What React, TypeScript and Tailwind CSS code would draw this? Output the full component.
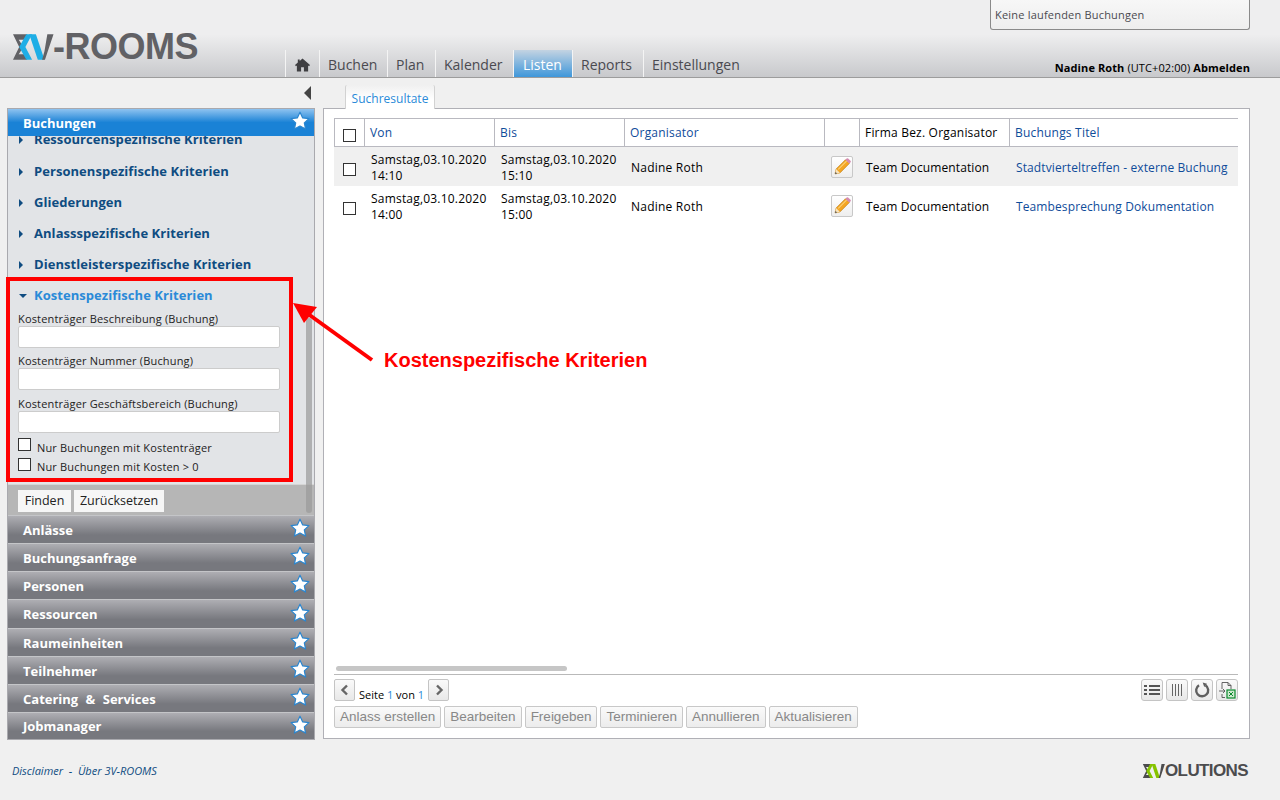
const font = "font-['Open_Sans','Noto_Sans',sans-serif]";

const tabs = [
  { label: "Buchen", width: "w-[68px] pl-[8px]" },
  { label: "Plan", width: "w-[48px] pl-[8px]" },
  { label: "Kalender", width: "w-[78px] pl-[8px]" },
  { label: "Listen", width: "w-[59px] pl-[9px]", active: true },
  { label: "Reports", width: "w-[71px] pl-[8px]" },
  { label: "Einstellungen", width: "w-[110px] pl-[8px]" },
];

const criteria = [
  "Personenspezifische Kriterien",
  "Gliederungen",
  "Anlassspezifische Kriterien",
  "Dienstleisterspezifische Kriterien",
];

const accordions = [
  { label: "Anlässe", height: "h-[28px]" },
  { label: "Buchungsanfrage", height: "h-[28px]" },
  { label: "Personen", height: "h-[28px]" },
  { label: "Ressourcen", height: "h-[29px]" },
  { label: "Raumeinheiten", height: "h-[28px]" },
  { label: "Teilnehmer", height: "h-[28px]" },
  { label: "Catering & Services", height: "h-[28px]" },
  { label: "Jobmanager", height: "h-[27px]" },
];

const costFields = ["Kostenträger Beschreibung (Buchung)", "Kostenträger Nummer (Buchung)", "Kostenträger Geschäftsbereich (Buchung)"];

const rows = [
  { from: "14:10", to: "15:10", title: "Stadtvierteltreffen - externe Buchung", shaded: true },
  { from: "14:00", to: "15:00", title: "Teambesprechung Dokumentation", shaded: false },
];

const actions = ["Anlass erstellen", "Bearbeiten", "Freigeben", "Terminieren", "Annullieren", "Aktualisieren"];

const gridCols = "grid-cols-[30px_130px_130px_200px_35px_150px_229px]";

function Mark({ dark, accent, className }: { dark: string; accent: string; className: string }) {
  return (
    <svg viewBox="0 0 43 27" className={className}>
      <path d="M0 0H15L12.500 6H6L11 13.500L6 21H12.500L15 27H0L6.500 13.500z" fill={dark} />
      <path d="M6.500 13.500L14 0H20L13 13.500L20 27H14z" fill={accent} />
      <path d="M17 0H24L33 27H26z" fill={accent} />
      <path d="M36 0H42.500L33.500 27H30.500L33 18z" fill={dark} />
    </svg>
  );
}

function Star() {
  return (
    <svg viewBox="0 0 20 20" className="h-[20px] w-[20px]">
      <path d="M10 1.200l2.700 5.700 6.200.7-4.600 4.300 1.300 6.200L10 15l-5.600 3.100 1.300-6.200-4.600-4.300 6.200-.7z" fill="#fff" stroke="#2a86d0" strokeWidth="1.200" strokeLinejoin="round" />
    </svg>
  );
}

function Box() {
  return <span className="block h-[13px] w-[13px] shrink-0 border border-[#333] bg-white" />;
}

function Caret({ open }: { open?: boolean }) {
  return open ? (
    <span className="h-0 w-0 border-x-[4px] border-t-[4px] border-x-transparent border-t-[#0f4c81]" />
  ) : (
    <span className="h-0 w-0 border-y-[4px] border-l-[4px] border-y-transparent border-l-[#0f4c81]" />
  );
}

function Pencil() {
  return (
    <span className="flex h-[22px] w-[22px] items-center justify-center rounded-[2px] border border-[#c8c8c8] bg-[linear-gradient(#ffffff,#eeeeee)]">
      <svg viewBox="0 0 16 16" className="h-[17px] w-[17px]">
        <path d="M1 15l1-4.600L10.800 1.600l3.600 3.600L5.600 14z" fill="#f5a623" stroke="#b9770e" strokeWidth=".6" />
        <path d="M4 10.800l7.800-7.800" stroke="#fbd27a" strokeWidth="1" />
        <path d="M10.800 1.600l1.100-1.100a1 1 0 0 1 1.400 0l2.200 2.200a1 1 0 0 1 0 1.400l-1.100 1.100z" fill="#d58bb0" />
        <path d="M1 15l1-4.600 3.600 3.600z" fill="#f7e3bd" />
        <path d="M1 15l.4-1.900 1.500 1.500z" fill="#444" />
      </svg>
    </span>
  );
}

function ToolButton({ children }: { children: React.ReactNode }) {
  return (
    <span className="flex h-[22px] w-[22px] items-center justify-center rounded-[3px] border border-[#c4c4c4] bg-[linear-gradient(#fafafa,#e8e8e8)]">
      {children}
    </span>
  );
}

function PagerButton({ dir }: { dir: "left" | "right" }) {
  return (
    <span className="flex h-[22px] w-[21px] items-center justify-center rounded-[2px] border border-[#c4c4c4] bg-[linear-gradient(#fafafa,#e8e8e8)]">
      <svg viewBox="0 0 12 12" className="h-[12px] w-[12px]">
        <path d={dir === "left" ? "M8 1.500L3.500 6 8 10.500" : "M4 1.500L8.500 6 4 10.500"} fill="none" stroke="#666" strokeWidth="2.400" />
      </svg>
    </span>
  );
}

function Header() {
  return (
    <header className="flex h-[78px] border-b border-[#9c9c9c] bg-[linear-gradient(#eeeeef_0%,#eeeeef_45%,#c8c9cc_100%)]">
      <div className="w-[285px] pl-[13px] pt-[34px]">
        <div className="flex items-center">
          <Mark dark="#616165" accent="#1eaee6" className="h-[26px] w-[41px] shrink-0" />
          <span className="-ml-[1px] font-['Liberation_Sans',sans-serif] text-[36px] font-bold leading-[26px] tracking-[-0.5px] text-[#616165]">-ROOMS</span>
        </div>
      </div>
      <nav className="flex h-[27px] self-end text-[14px] text-[#4a4a50]">
        <div className="flex w-[34px] items-center justify-center border-l border-[#f4f4f4] pr-[1px] pt-[3px]">
          <svg viewBox="0 0 16 14" className="h-[14px] w-[15px]">
            <path d="M8 0l8 7-1 1.200-1-.800V14H9.500V9.500h-3V14H2V7.400l-1 .800L0 7l3-2.600V1h2v1.700z" fill="#3f3f42" />
          </svg>
        </div>
        {tabs.map((t) => (
          <div
            key={t.label}
            className={`flex items-center border-l border-[#f4f4f4] pt-[2px] ${t.width} ${t.active ? "bg-[linear-gradient(#c3d3e2,#3f97da)] text-white" : ""}`}
          >
            {t.label}
          </div>
        ))}
      </nav>
      <div className="flex flex-1 flex-col items-end pr-[30px]">
        <div className="flex h-[30px] w-[260px] items-end rounded-b-[3px] border border-t-0 border-[#8a8a8a] bg-[linear-gradient(#f7f7f7,#eeeeee)] pb-[6px] pl-[4px] text-[11px] tracking-[0.2px] text-[#4a4a50]">
          Keine laufenden Buchungen
        </div>
        <div className="mt-auto pb-[1px] text-[11px] tracking-[0.1px] text-black">
          <b className="font-bold">Nadine Roth</b> (UTC+02:00) <b className="font-bold">Abmelden</b>
        </div>
      </div>
    </header>
  );
}

function Sidebar() {
  return (
    <aside className="relative flex h-[632px] w-[308px] shrink-0 flex-col border border-[#a9a9ae] bg-[#e2e4e7]">
      <div className="z-10 flex h-[27px] shrink-0 items-center justify-between bg-[linear-gradient(#8fc3f0,#1a82d6_50%,#1a82d6)] pl-[15px] pr-[4px] text-[13px] font-bold text-white">
        <span className="pt-[2px]">Buchungen</span>
        <span className="-mt-[3px]"><Star /></span>
      </div>
      <div className="flex-1 overflow-hidden">
        <div className="-mt-[12px] tracking-[0.05px]">
          <div className="mb-[1px] flex h-[31px] items-center gap-[11px] pl-[11px] text-[13px] font-bold text-[#0f4c81]">
            <Caret />
            Ressourcenspezifische Kriterien
          </div>
          {criteria.map((c) => (
            <div key={c} className="flex h-[31px] items-center gap-[11px] pl-[11px] text-[13px] font-bold text-[#0f4c81]">
              <Caret />
              {c}
            </div>
          ))}
          <div className="flex h-[31px] items-center gap-[7px] pl-[11px] text-[13px] font-bold text-[#2a8ad8]">
            <Caret open />
            Kostenspezifische Kriterien
          </div>
          <div className="pl-[10px] text-[11px] tracking-[0.17px] text-[#222]">
            {costFields.map((f, i) => (
              <div key={f} className={i === 1 ? "mb-[6px]" : "mb-[5px]"}>
                <div className="h-[15px] leading-[15px]">{f}</div>
                <input className="block h-[22px] w-[262px] rounded-[2px] border border-[#ccc] bg-white" />
              </div>
            ))}
            <div className="flex h-[20px] items-start gap-[6px]"><Box /><span className="mt-[2px] leading-[15px]">Nur Buchungen mit Kostenträger</span></div>
            <div className="flex h-[20px] items-start gap-[6px]"><Box /><span className="mt-[1px] leading-[15px]">Nur Buchungen mit Kosten &gt; 0</span></div>
          </div>
        </div>
      </div>
      <div className="flex h-[31px] shrink-0 items-start gap-[3px] border-t border-[#d5d5d5] bg-[#b6b6b6] pl-[10px] pt-[5px] text-[12.500px] text-[#222]">
        <span className="flex h-[22px] w-[53px] items-center justify-center bg-[#f6f6f6]">Finden</span>
        <span className="flex h-[22px] w-[90px] items-center justify-center bg-[#f6f6f6]">Zurücksetzen</span>
      </div>
      {accordions.map((a) => (
        <div
          key={a.label}
          className={`flex ${a.height} shrink-0 items-center justify-between border-t border-[#c4c5c8] bg-[linear-gradient(#aeaeb3,#77787e_70%,#77787e)] pl-[15px] pr-[4px] text-[13px] font-bold text-white [word-spacing:4px]`}
        >
          <span className="pt-[2px]">{a.label}</span>
          <span className="-mt-[3px]"><Star /></span>
        </div>
      ))}
      <div className="absolute bottom-[226px] right-[2px] top-[209px] w-[6px] rounded-full bg-[#9a9a9a]/70" />
    </aside>
  );
}

function ResultsTable() {
  return (
    <div className="flex-1 text-[12px] tracking-[0.11px] text-black">
      <div className={`grid h-[29px] ${gridCols} border-y border-[#b9b9c0] tracking-[0.2px] text-[#0f4c9a]`}>
        <div className="flex items-center border-l border-[#b9b9c0] pl-[8px] pt-[5px]"><Box /></div>
        <div className="flex items-center border-l border-[#b9b9c0] pl-[5px]">Von</div>
        <div className="flex items-center border-l border-[#b9b9c0] pl-[5px]">Bis</div>
        <div className="flex items-center border-l border-[#b9b9c0] pl-[5px]">Organisator</div>
        <div className="border-l border-[#b9b9c0]" />
        <div className="flex items-center border-l border-[#b9b9c0] pl-[5px] text-black">Firma Bez. Organisator</div>
        <div className="flex items-center border-l border-[#b9b9c0] pl-[5px]">Buchungs Titel</div>
      </div>
      {rows.map((r) => (
        <div key={r.from} className={`grid h-[39px] ${gridCols} items-center pt-[2px] ${r.shaded ? "bg-[#f0f0f0]" : ""}`}>
          <div className="pl-[9px] pt-[4px]"><Box /></div>
          <div className="pl-[7px] leading-[16px] tracking-[0.2px]">Samstag,03.10.2020<br />{r.from}</div>
          <div className="pl-[7px] leading-[16px] tracking-[0.2px]">Samstag,03.10.2020<br />{r.to}</div>
          <div className="pl-[7px] tracking-[0.22px]">Nadine Roth</div>
          <div className="-mt-[2px] pl-[7px]"><Pencil /></div>
          <div className="pl-[7px]">Team Documentation</div>
          <div className="pl-[7px] text-[#0f4c9a]">{r.title}</div>
        </div>
      ))}
    </div>
  );
}

function Footer() {
  return (
    <div>
      <div className="ml-[2px] h-[5px] w-[231px] rounded-full bg-[#c6c6c6]" />
      <div className="mt-[3px] border-t border-[#b9b9b9] pt-[4px]">
        <div className="flex h-[22px] items-center justify-between">
          <div className="flex items-end gap-[4px] text-[11px] text-black">
            <PagerButton dir="left" />
            <span className="leading-[13px]">Seite <span className="text-[#2a8ad8]">1</span> von <span className="text-[#2a8ad8]">1</span></span>
            <PagerButton dir="right" />
          </div>
          <div className="flex gap-[3px]">
            <ToolButton>
              <svg viewBox="0 0 16 12" className="h-[12px] w-[16px]" fill="#555">
                <path d="M0 1h3v2H0zM5 1h11v2H5zM0 5h3v2H0zM5 5h11v2H5zM0 9h3v2H0zM5 9h11v2H5z" />
              </svg>
            </ToolButton>
            <ToolButton>
              <svg viewBox="0 0 12 14" className="h-[14px] w-[12px]" fill="#666">
                <path d="M1 1h1v12H1zM4 1h1v12H4zM7 1h1v12H7zM10 1h1v12h-1z" />
              </svg>
            </ToolButton>
            <ToolButton>
              <svg viewBox="0 0 16 16" className="h-[16px] w-[16px]" fill="none">
                <path d="M5 3.200A6 6 0 1 0 11.500 3.300" stroke="#5f5f5f" strokeWidth="2.400" />
                <path d="M8.700 .5l4.300 1.200-2.800 3.400z" fill="#5f5f5f" />
              </svg>
            </ToolButton>
            <ToolButton>
              <svg viewBox="0 0 18 18" className="h-[18px] w-[18px]" fill="none">
                <path d="M4 8V1.500h6l3 3V8M4 13v3.500h3" stroke="#555" strokeWidth=".9" />
                <path d="M10 1.500v3h3M1 10h6M5 8l2 2-2 2" stroke="#555" strokeWidth=".9" />
                <rect x="9" y="9" width="8" height="8" fill="#cfe8cf" stroke="#0b8a2e" strokeWidth="1.200" />
                <path d="M11 11l4 4M15 11l-4 4" stroke="#0b8a2e" />
              </svg>
            </ToolButton>
          </div>
        </div>
        <div className="mt-[5px] flex gap-[3px] text-[#888]">
          {actions.map((a) => (
            <span key={a} className="flex h-[22px] items-center rounded-[2px] border border-[#c8c8c8] bg-[linear-gradient(#fafafa,#ececec)] px-[5px] font-['Liberation_Sans',sans-serif] text-[13.500px]">
              {a}
            </span>
          ))}
        </div>
      </div>
    </div>
  );
}

function Main() {
  return (
    <main className="ml-[8px] w-[927px]">
      <div className="flex h-[631px] flex-col border border-[#b0b0b6] bg-white pb-[10px] pl-[10px] pr-[11px] pt-[9px]">
        <ResultsTable />
        <Footer />
      </div>
    </main>
  );
}

export default function App() {
  return (
    <div className={`relative h-[800px] w-[1280px] overflow-hidden bg-[#f0f0f0] ${font}`}>
      <Header />
      <div className="flex h-[30px] items-end pb-[1px]">
        <div className="flex h-full w-[345px] items-center justify-end pr-[34px]">
          <span className="h-0 w-0 border-y-[7px] border-r-[7px] border-y-transparent border-r-[#444]" />
        </div>
        <div className="relative z-10 -mb-[2px] flex h-[24px] w-[90px] items-center justify-center rounded-t-[2px] border-x border-[#d2d2d2] bg-[linear-gradient(#f0f0f0,#ffffff_60%)] pt-[3px] text-[12px] text-[#2a8ad8]">
          Suchresultate
        </div>
      </div>
      <div className="flex pl-[7px]">
        <Sidebar />
        <Main />
      </div>
      <div className="flex items-center justify-between pl-[12px] pr-[32px] pt-[22px]">
        <span className="text-[11px] italic text-[#0f4c81]">Disclaimer&nbsp; - &nbsp;Über 3V-ROOMS</span>
        <div className="flex items-center">
          <Mark dark="#4c4c4e" accent="#86c300" className="h-[14px] w-[24px] shrink-0" />
          <span className="-ml-[1px] font-['Liberation_Sans',sans-serif] text-[17px] font-bold leading-[18px] tracking-[-0.6px] text-[#4c4c4e]">OLUTIONS</span>
        </div>
      </div>

      {/* annotation over the sidebar */}
      <div className="absolute left-[6px] top-[277px] h-[205px] w-[287px] border-4 border-[#ff0000]" />
      <svg className="absolute left-[290px] top-[300px] h-[70px] w-[90px]" viewBox="0 0 90 70">
        <path d="M82 60L14 11" stroke="#f00" strokeWidth="4" />
        <path d="M3 3l24 4-13 16z" fill="#f00" />
      </svg>
      <div className="absolute left-[384px] top-[348px] font-['Liberation_Sans',sans-serif] text-[20px] font-bold leading-[24px] text-[#ff0000]">
        Kostenspezifische Kriterien
      </div>
    </div>
  );
}
